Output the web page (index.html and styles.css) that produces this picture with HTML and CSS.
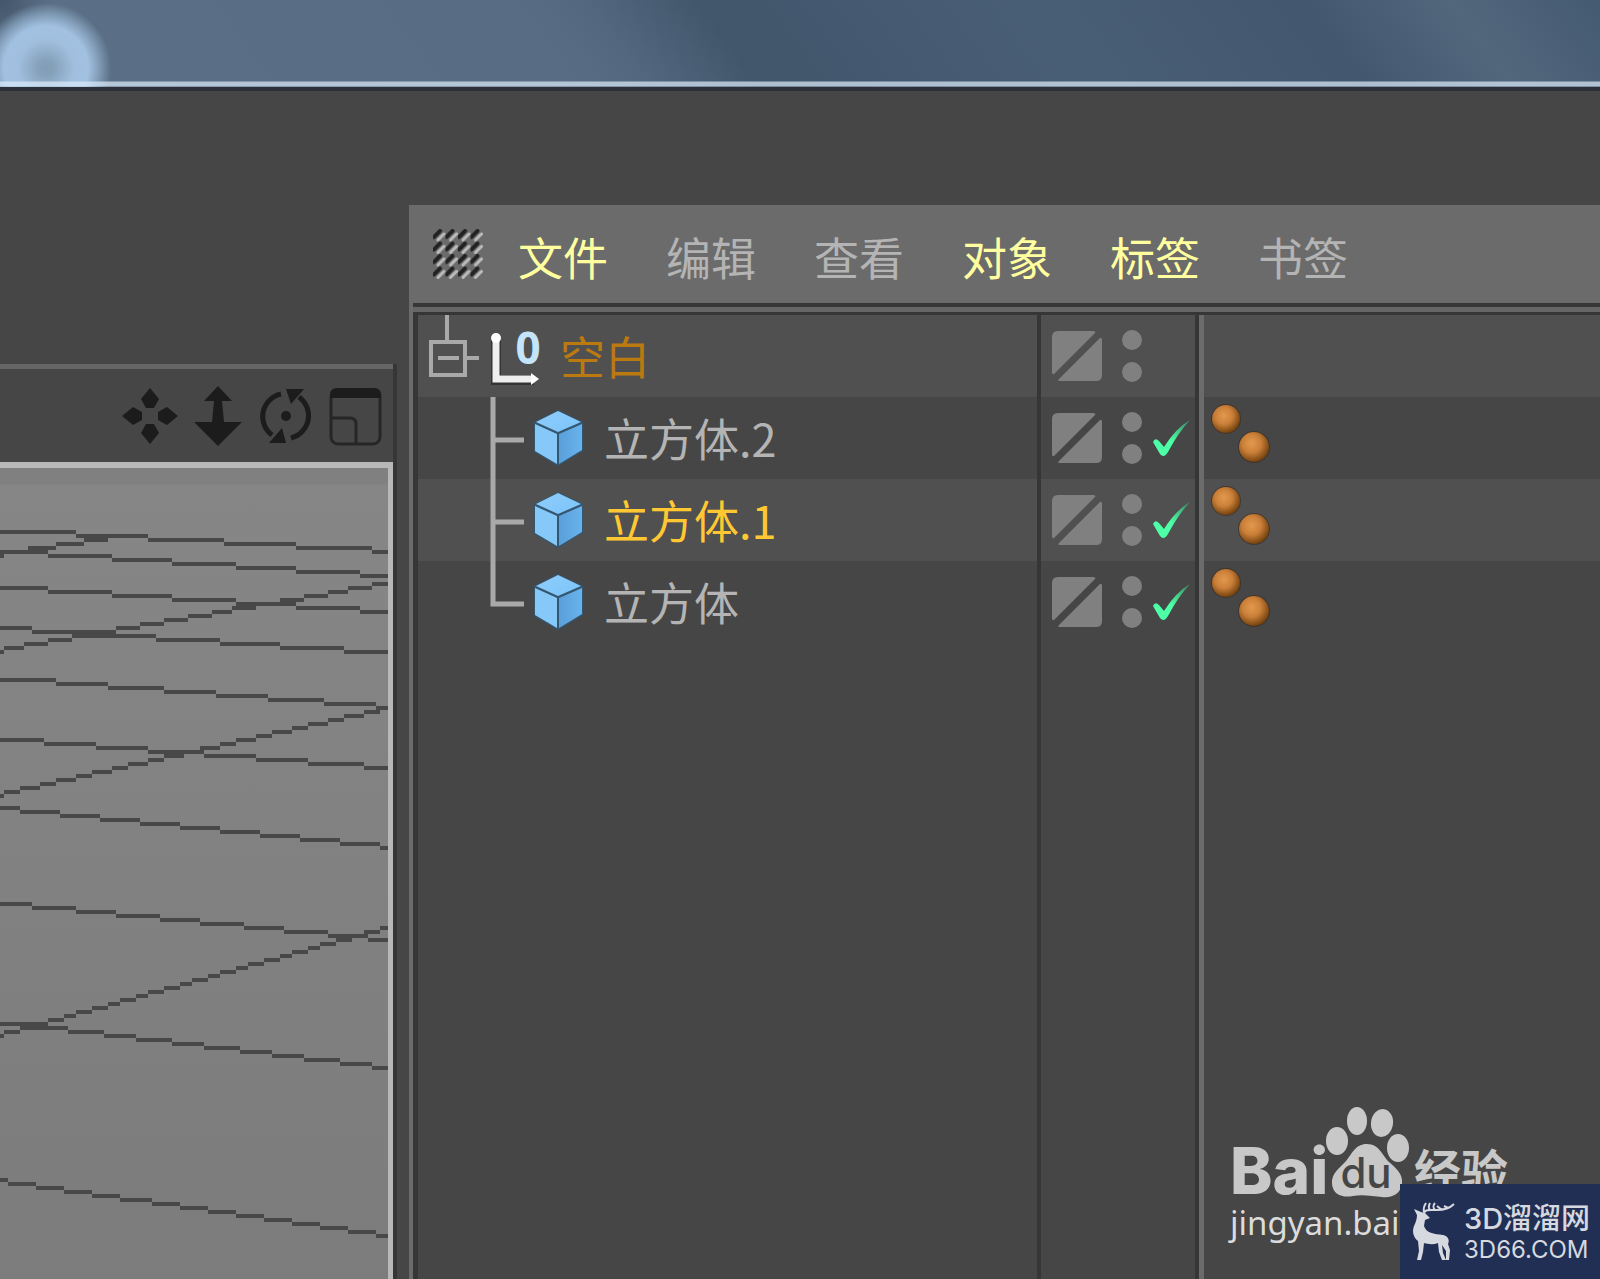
FILE: index.html
```html
<!DOCTYPE html>
<html lang="zh-CN">
<head>
    <meta charset="UTF-8">
    <meta name="viewport" content="width=device-width, initial-scale=1.0">
    <title>对象管理器</title>
    <link rel="stylesheet" href="styles.css">
</head>
<body>
    <svg class="defs" width="0" height="0" aria-hidden="true">
        <defs>
            <linearGradient id="cubeTop" x1="0" y1="0" x2="1" y2="1">
                <stop offset="0" stop-color="#8fcdfa"/>
                <stop offset="1" stop-color="#7cc4fb"/>
            </linearGradient>
            <linearGradient id="cubeRight" x1="0" y1="0" x2="1" y2="0">
                <stop offset="0" stop-color="#5a9fd8"/>
                <stop offset="1" stop-color="#68b3ee"/>
            </linearGradient>
            <radialGradient id="ballFill" cx="0.42" cy="0.38" r="0.62">
                <stop offset="0" stop-color="#e2994e"/>
                <stop offset="0.5" stop-color="#cb8039"/>
                <stop offset="1" stop-color="#75430f"/>
            </radialGradient>
            <pattern id="gripLine" width="12.5" height="12.5" patternUnits="userSpaceOnUse">
                <path d="M1 8L7 2" stroke="#222" stroke-width="4" stroke-linecap="round"/>
                <path d="M5 11L11 5" stroke="#bbb" stroke-width="3" stroke-linecap="round"/>
            </pattern>
        </defs>
        <symbol id="cube" viewBox="0 0 56 60">
            <path d="M26 2L51 14V43L26 58L2 44V14Z" fill="#35566f"/>
            <path d="M26 3L49 14L26 24L4 14Z" fill="url(#cubeTop)"/>
            <path d="M3 16L25 26V56L3 43Z" fill="#86c8f8"/>
            <path d="M27 26L50 16V42L27 56Z" fill="url(#cubeRight)"/>
        </symbol>
        <symbol id="layer" viewBox="0 0 50 50">
            <path d="M6 0H41Q44 0 43 2L2 43Q0 44 0 41V6Q0 0 6 0Z"/>
            <path d="M50 9V44Q50 50 44 50H8Q5 50 7 48L48 7Q50 6 50 9Z"/>
        </symbol>
        <symbol id="dots" viewBox="0 0 22 54">
            <circle cx="11" cy="11" r="10"/>
            <circle cx="11" cy="43" r="10"/>
        </symbol>
        <symbol id="balls" viewBox="0 0 60 60">
            <circle cx="16" cy="15" r="15" fill="#3a2a1a" opacity="0.6"/>
            <circle cx="44" cy="43" r="16" fill="#3a2a1a" opacity="0.6"/>
            <circle cx="16" cy="15" r="14" fill="url(#ballFill)"/>
            <circle cx="44" cy="43" r="15" fill="url(#ballFill)"/>
        </symbol>
        <symbol id="branch" viewBox="0 0 114 82">
            <path d="M75 0V82M75 43H106" fill="none" stroke="#a9a9a9" stroke-width="5"/>
        </symbol>
        <symbol id="branchEnd" viewBox="0 0 114 82">
            <path d="M75 0V43H106" fill="none" stroke="#a9a9a9" stroke-width="5"/>
        </symbol>
    </svg>

    <header class="wallpaper"></header>

    <main class="workspace">
        <section class="viewport" aria-label="视图">
            <div class="view-tools">
                <button type="button" aria-label="平移">
                    <svg viewBox="0 0 56 60"><path d="M28 2L37 13L32 22H24L19 13ZM28 58L37 47L32 38H24L19 47ZM0 30L11 21L20 26V34L11 39ZM56 30L45 21L36 26V34L45 39Z"/></svg>
                </button>
                <button type="button" aria-label="缩放">
                    <svg viewBox="0 0 56 60"><path d="M28 0L42 15H32L34 36H52L28 60L4 36H22L24 15H14Z"/></svg>
                </button>
                <button type="button" aria-label="旋转">
                    <svg viewBox="0 0 56 60">
                        <path d="M23 8A23 23 0 0 0 14 49M33 52A23 23 0 0 0 41 11" fill="none" stroke="#1c1c1c" stroke-width="5"/>
                        <path d="M28 3H46L33 18Z"/>
                        <path d="M28 57H11L24 42Z"/>
                        <circle cx="28" cy="30" r="5"/>
                    </svg>
                </button>
                <button type="button" aria-label="切换视图">
                    <svg viewBox="0 0 56 60">
                        <rect x="5" y="4" width="49" height="54" rx="7" fill="none" stroke="#262626" stroke-width="3"/>
                        <path d="M4 12V9Q4 2 11 2H48Q55 2 55 9V12Z"/>
                        <path d="M5 32H24Q30 32 30 38V58" fill="none" stroke="#262626" stroke-width="3"/>
                    </svg>
                </button>
            </div>
            <svg class="grid-floor" viewBox="0 0 388 811" preserveAspectRatio="xMinYMin slice" aria-hidden="true">
                <path id="gridLines"/>
            </svg>
        </section>

        <section class="manager" aria-label="对象">
            <nav class="menu">
                <svg class="grip" viewBox="0 0 50 50" aria-hidden="true"><rect width="50" height="50" fill="url(#gripLine)"/></svg>
                <button type="button" class="active">文件</button>
                <button type="button">编辑</button>
                <button type="button">查看</button>
                <button type="button" class="active">对象</button>
                <button type="button" class="active">标签</button>
                <button type="button">书签</button>
            </nav>
            <div class="objects">
                <table>
                    <colgroup>
                        <col class="col-name">
                        <col class="col-flags">
                        <col>
                    </colgroup>
                    <tbody>
                        <tr>
                            <td>
                                <div class="name null">
                                    <svg class="tree-root" viewBox="0 0 70 82" aria-hidden="true">
                                        <path d="M29 0V26M13 27H47V60H13ZM20 43H41M49 43H61" fill="none" stroke="#a9a9a9" stroke-width="4"/>
                                    </svg>
                                    <svg class="icon" viewBox="0 0 56 60" aria-hidden="true">
                                        <path d="M8 11V54H46" fill="none" stroke="#333" stroke-width="10"/>
                                        <path d="M8 11V53H44" fill="none" stroke="#eee" stroke-width="7"/>
                                        <circle cx="8" cy="12" r="5" fill="#fff"/>
                                        <path d="M43 47L51 53L43 59Z" fill="#fff"/>
                                        <text x="40" y="38" text-anchor="middle" class="zero">0</text>
                                    </svg>
                                    <span>空白</span>
                                </div>
                            </td>
                            <td>
                                <div class="flags">
                                    <button type="button" aria-label="图层"><svg class="layer"><use href="#layer"/></svg></button>
                                    <button type="button" aria-label="可见性"><svg class="dots"><use href="#dots"/></svg></button>
                                </div>
                            </td>
                            <td></td>
                        </tr>
                        <tr>
                            <td>
                                <div class="name">
                                    <svg class="tree" aria-hidden="true"><use href="#branch"/></svg>
                                    <svg class="icon" aria-hidden="true"><use href="#cube"/></svg>
                                    <span>立方体.2</span>
                                </div>
                            </td>
                            <td>
                                <div class="flags">
                                    <button type="button" aria-label="图层"><svg class="layer"><use href="#layer"/></svg></button>
                                    <button type="button" aria-label="可见性"><svg class="dots"><use href="#dots"/></svg></button>
                                    <input type="checkbox" aria-label="启用 立方体.2" checked>
                                </div>
                            </td>
                            <td><button type="button" class="tags" aria-label="标签"><svg><use href="#balls"/></svg></button></td>
                        </tr>
                        <tr>
                            <td>
                                <div class="name selected">
                                    <svg class="tree" aria-hidden="true"><use href="#branch"/></svg>
                                    <svg class="icon" aria-hidden="true"><use href="#cube"/></svg>
                                    <span>立方体.1</span>
                                </div>
                            </td>
                            <td>
                                <div class="flags">
                                    <button type="button" aria-label="图层"><svg class="layer"><use href="#layer"/></svg></button>
                                    <button type="button" aria-label="可见性"><svg class="dots"><use href="#dots"/></svg></button>
                                    <input type="checkbox" aria-label="启用 立方体.1" checked>
                                </div>
                            </td>
                            <td><button type="button" class="tags" aria-label="标签"><svg><use href="#balls"/></svg></button></td>
                        </tr>
                        <tr>
                            <td>
                                <div class="name">
                                    <svg class="tree" aria-hidden="true"><use href="#branchEnd"/></svg>
                                    <svg class="icon" aria-hidden="true"><use href="#cube"/></svg>
                                    <span>立方体</span>
                                </div>
                            </td>
                            <td>
                                <div class="flags">
                                    <button type="button" aria-label="图层"><svg class="layer"><use href="#layer"/></svg></button>
                                    <button type="button" aria-label="可见性"><svg class="dots"><use href="#dots"/></svg></button>
                                    <input type="checkbox" aria-label="启用 立方体" checked>
                                </div>
                            </td>
                            <td><button type="button" class="tags" aria-label="标签"><svg><use href="#balls"/></svg></button></td>
                        </tr>
                        <tr class="rest"><td></td><td></td><td></td></tr>
                    </tbody>
                </table>
            </div>
        </section>
    </main>

    <div class="baidu">
        <div class="baidu-logo">
            <span class="bai">Bai</span>
            <svg class="paw" viewBox="0 0 84 92" aria-hidden="true">
                <ellipse cx="11" cy="34" rx="11" ry="14"/>
                <ellipse cx="31" cy="14" rx="10" ry="14"/>
                <ellipse cx="56" cy="16" rx="11" ry="14" transform="rotate(8 56 16)"/>
                <ellipse cx="72" cy="41" rx="11" ry="14"/>
                <path d="M41 37C53 37 56 48 63 55C71 62 77 67 76 77C74 88 65 91 56 90C47 89 35 87 27 89C17 91 7 88 6 77C5 66 14 61 20 54C26 47 29 37 41 37Z"/>
                <text x="40" y="81" text-anchor="middle" class="du">du</text>
            </svg>
            <span class="jingyan">经验</span>
        </div>
        <div class="baidu-url">jingyan.bai</div>
    </div>

    <div class="badge">
        <svg class="deer" viewBox="0 0 44 60" aria-hidden="true">
            <path d="M2 7L9 10L13 11L18 16L13 18L12 24C14 31 22 32 31 33C36 34 38 38 36 42L38 48L37 58H34L34 49L30 43L31 51L34 58H30L27 50L26 41C21 43 16 42 12 41L11 50L9 58H5L7 49L6 39C1 35 0 29 2 24C4 20 5 16 5 13Z"/>
            <path d="M12 11C13 7 18 8 25 8C33 8 38 6 42 2M12 10C11 6 12 4 14 1M18 8C16 6 17 3 18 1M23 8C21 6 21 3 23 1M30 8L25 4M36 6L32 4" fill="none" stroke="#d6d9df" stroke-width="2"/>
        </svg>
        <div class="badge-text">
            <div class="badge-name">3D溜溜网</div>
            <div class="badge-site">3D66.COM</div>
        </div>
    </div>

    <script src="script.js"></script>
</body>
</html>
```
FILE: styles.css
```css
* {
    box-sizing: border-box;
}
body {
    margin: 0;
    height: 100vh;
    display: flex;
    flex-direction: column;
    position: relative;
    overflow: hidden;
    background-color: #464646;
    color: #b4b4b4;
    font-family: "Noto Sans CJK SC", "Noto Sans", sans-serif;
    font-size: 45px;
}
button {
    display: block;
    padding: 0;
    border: none;
    background: none;
    color: inherit;
    font: inherit;
    cursor: pointer;
}
svg {
    display: block;
    flex: none;
}
.defs {
    position: absolute;
}

/* 桌面背景 */
.wallpaper {
    flex: none;
    height: 91px;
    border-bottom: 4px solid #2b3136;
    background:
        linear-gradient(transparent 81px, rgba(220, 235, 250, 0.7) 82px, rgba(220, 235, 250, 0.7) 86px, transparent 87px),
        radial-gradient(circle at 46px 68px, #829db5 0, #86a1ba 8px, #a0bfde 28px, #a2c1e1 42px, rgba(150, 180, 210, 0.6) 54px, transparent 65px),
        radial-gradient(circle at 0 0, #42556a 0, transparent 50px),
        linear-gradient(53deg, #5b7086 0%, #586d83 35%, #53677e 39%, #41566b 46%, #465b71 57%, #485e74 66%, #43586f 82%, #52677c 91%, #445a71 100%);
}

.workspace {
    flex: 1;
    min-height: 0;
    display: grid;
    grid-template-columns: 397px 1fr;
    column-gap: 12px;
}

/* 视图 */
.viewport {
    display: flex;
    flex-direction: column;
    min-height: 0;
    margin-top: 273px;
    border-right: 4px solid #363636;
}
.view-tools {
    flex: none;
    display: flex;
    justify-content: flex-end;
    align-items: center;
    gap: 12px;
    height: 98px;
    padding-right: 11px;
    border-top: 5px solid #666;
}
.view-tools svg {
    width: 56px;
    height: 60px;
    fill: #1c1c1c;
}
.grid-floor {
    flex: 1;
    min-height: 0;
    width: 100%;
    border-top: 6px solid #b8b8b8;
    border-right: 5px solid #b8b8b8;
    background: linear-gradient(#808080 16px, #868686 17px, #7c7c7c);
}
.grid-floor path {
    fill: none;
    stroke: #484848;
    stroke-width: 4;
}

/* 对象管理器 */
.manager {
    display: flex;
    flex-direction: column;
    min-width: 0;
    min-height: 0;
    margin-top: 114px;
    border-left: 4px solid #6b6b6b;
}
.menu {
    flex: none;
    display: flex;
    align-items: center;
    gap: 58px;
    height: 98px;
    padding-left: 20px;
    background-color: #6b6b6b;
    color: #b4b4b4;
}
.grip {
    width: 50px;
    height: 50px;
    margin-right: -23px;
}
.menu button {
    padding-top: 6px;
    line-height: 60px;
}
.menu .active {
    color: #ffffa0;
}
.objects {
    flex: 1;
    min-height: 0;
    padding-top: 5px;
    border-top: 4px solid #363636;
    background-color: #666;
}
table {
    width: 100%;
    height: 100%;
    table-layout: fixed;
    border-collapse: separate;
    border-spacing: 0;
    border-top: 3px solid #363636;
    border-left: 5px solid #363636;
    background-color: #464646;
}
.col-name {
    width: 623px;
}
.col-flags {
    width: 158px;
}
tr {
    height: 82px;
}
tr.rest {
    height: auto;
}
tr:nth-child(odd):not(.rest) {
    background-color: #505050;
}
td {
    padding: 0;
    border-right: 4px solid #363636;
}
td:last-child {
    border-right: none;
    border-left: 5px solid #6b6b6b;
}
.name {
    display: flex;
    align-items: center;
    height: 82px;
    line-height: 80px;
}
.name span {
    margin-left: 16px;
}
.tree-root {
    width: 70px;
    height: 82px;
}
.tree {
    width: 114px;
    height: 82px;
}
.icon {
    width: 56px;
    height: 60px;
    overflow: visible;
}
.zero {
    fill: #c3e4fb;
    font: bold 44px "Noto Sans", sans-serif;
}
.null {
    color: #bb7a10;
}
.selected {
    color: #ffc832;
}
.flags {
    display: flex;
    align-items: center;
    height: 82px;
    padding-left: 11px;
    fill: #808080;
}
.layer {
    width: 50px;
    height: 50px;
}
.dots {
    width: 22px;
    height: 54px;
    margin-left: 19px;
}
.flags input {
    appearance: none;
    width: 40px;
    height: 40px;
    margin: 0 0 0 9px;
    background: linear-gradient(45deg, #4dffa6 45%, #3f9c70 85%);
    clip-path: path("M1 24Q3 19 7 23L12 29Q24 10 38 2Q26 15 16 34Q12 41 8 36Z");
}
td:last-child {
    vertical-align: top;
}
.tags {
    margin: 7px 0 0 6px;
}
.tags svg {
    width: 60px;
    height: 60px;
}

/* 水印 */
.baidu {
    position: absolute;
    right: 90px;
    bottom: 32px;
    width: 280px;
    color: #c8c8c8;
}
.baidu-logo {
    display: flex;
    align-items: flex-end;
    height: 92px;
}
.bai {
    width: 96px;
    font: 800 64px/56px Inter, sans-serif;
}
.paw {
    width: 84px;
    height: 92px;
    fill: #c8c8c8;
}
.du {
    fill: #464646;
    font: 500 42px Inter, sans-serif;
}
.jingyan {
    margin-left: 4px;
    font-size: 47px;
    font-weight: bold;
    line-height: 60px;
}
.baidu-url {
    font: 33px/48px "Noto Sans", sans-serif;
    color: #dcdcdc;
}
.badge {
    position: absolute;
    right: 0;
    bottom: 0;
    display: flex;
    align-items: center;
    gap: 8px;
    width: 200px;
    height: 95px;
    padding-left: 12px;
    background-color: #212f55;
    color: #d6d9df;
}
.deer {
    width: 44px;
    height: 60px;
    fill: #d6d9df;
}
.badge-name {
    font: 500 29px/36px Inter, "Noto Sans CJK SC", sans-serif;
    white-space: nowrap;
}
.badge-site {
    font: 24px/26px Inter, sans-serif;
}
```
FILE: script.js
```js
// 地面网格: [左端 y, 右端 y, 右端 x]
const lines = [
    [62, 83, 388], [83, 108, 388], [86, 70, 108], [119, 144, 388],
    [160, 185, 388], [182, 115, 388], [210, 239, 388], [271, 300, 388],
    [326, 240, 388], [340, 379, 388], [435, 472, 388], [567, 459, 388],
    [554, 600, 388], [713, 768, 388]
];
const step = 4;
let d = '';
for (const [y1, y2, end] of lines) {
    let start = 0;
    let level = Math.round(y1 / step);
    for (let x = step; x <= end; x += step) {
        const next = Math.round((y1 + (y2 - y1) * x / end) / step);
        if (next !== level || x + step > end) {
            d += `M${start} ${level * step}H${x}`;
            start = x;
            level = next;
        }
    }
}
document.getElementById('gridLines').setAttribute('d', d);
```
